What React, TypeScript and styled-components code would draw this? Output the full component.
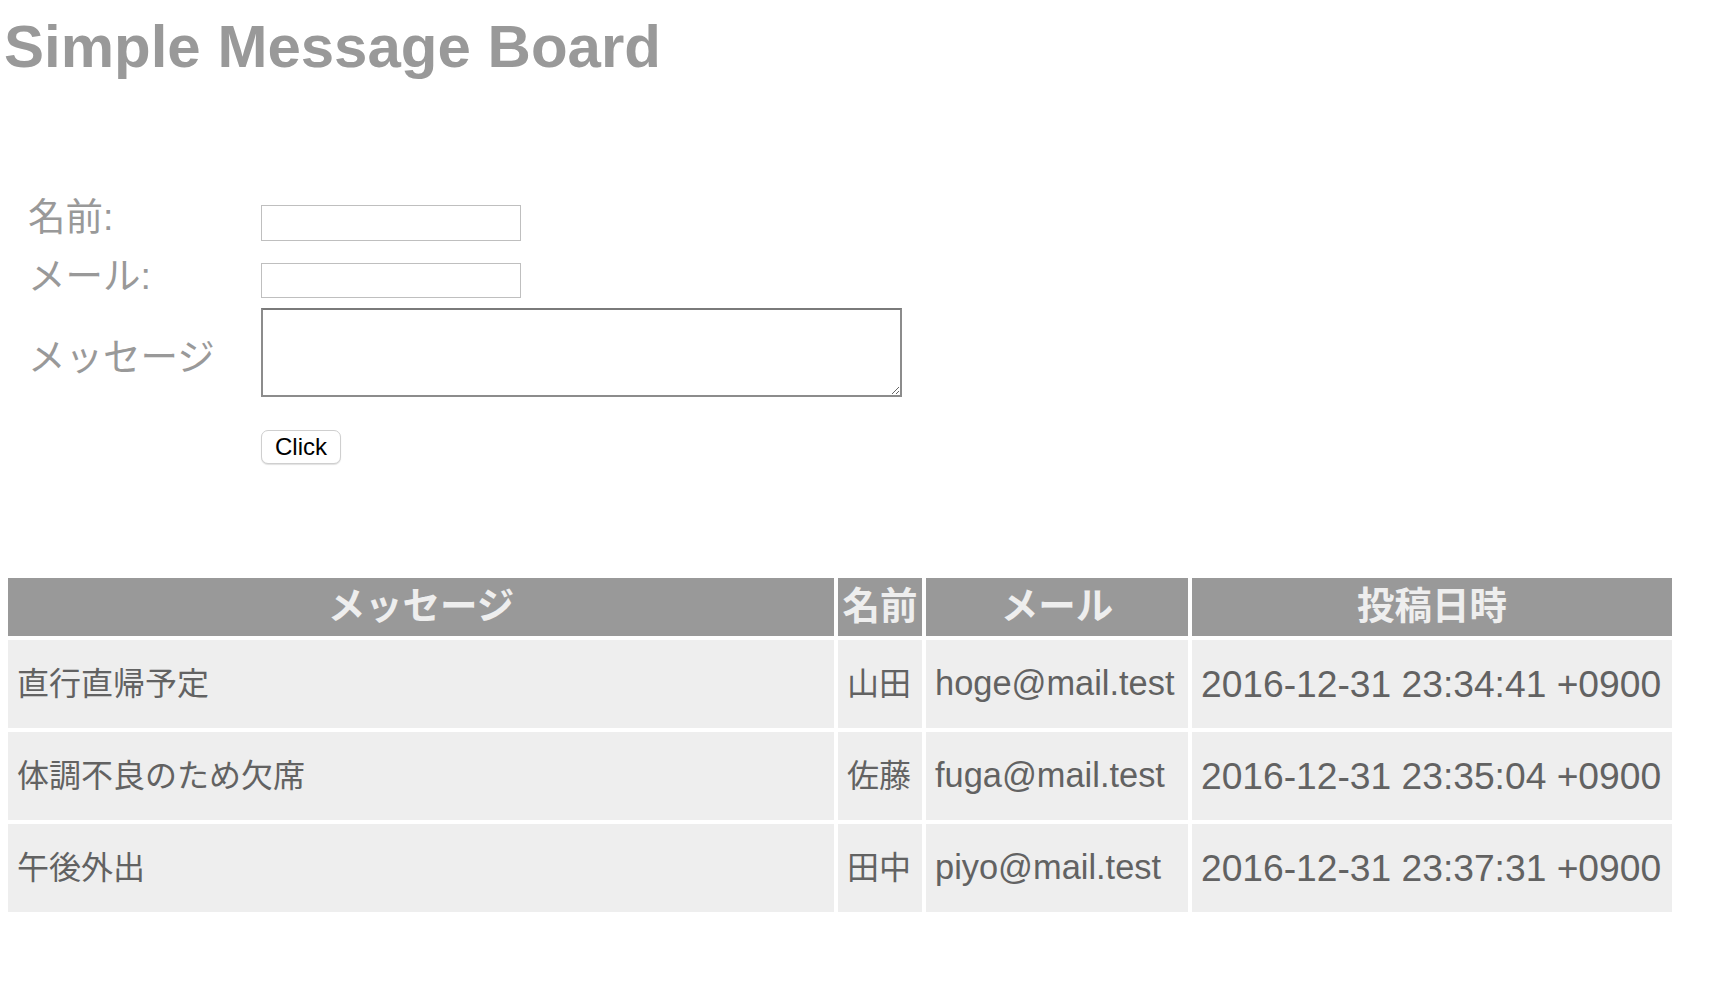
import React from "react";
import styled, { createGlobalStyle } from "styled-components";

const GlobalStyle = createGlobalStyle`
  body {
    margin: 0;
    background: #fff;
    font-family: "Liberation Sans", "Noto Sans CJK JP", sans-serif;
  }
`;

const Page = styled.div`
  padding: 0 4px;
`;

const Title = styled.h1`
  margin: 17px 0 0;
  font-size: 60px;
  line-height: 1;
  font-weight: bold;
  color: #999;
`;

const Form = styled.form`
  margin-top: 128px;
  padding-left: 24px;
  display: flex;
  flex-direction: column;
`;

const FieldRow = styled.div<{ $gap: number }>`
  display: flex;
  align-items: center;
  margin-top: ${(p) => p.$gap}px;
`;

const Label = styled.label<{ $shift: number }>`
  width: 233px;
  flex: none;
  font-size: 37.5px;
  line-height: 34px;
  color: #999;
  margin-top: ${(p) => -p.$shift}px;
  margin-bottom: ${(p) => p.$shift}px;
`;

const TextInput = styled.input<{ $height: number }>`
  box-sizing: border-box;
  width: 260px;
  height: ${(p) => p.$height}px;
  border: 1px solid #bfbfbf;
  background: #fff;
  padding: 2px 4px;
  font-size: 24px;
  outline: none;
`;

const MessageArea = styled.textarea`
  box-sizing: border-box;
  width: 641px;
  height: 89px;
  border: 2px solid #8c8c8c;
  border-top-color: #7a7a7a;
  background: #fff;
  margin: 0;
  padding: 2px 4px;
  font-size: 24px;
  outline: none;
`;

const SubmitButton = styled.button`
  margin-left: 233px;
  box-sizing: border-box;
  width: 80px;
  height: 34px;
  border: 1px solid #cfcfcf;
  border-radius: 7px;
  background: #fff;
  box-shadow: 0 1px 1px rgba(0, 0, 0, 0.12);
  font-family: "Liberation Sans", sans-serif;
  font-size: 24px;
  color: #000;
  padding: 0;
`;

const Board = styled.table`
  margin-top: 110px;
  border-collapse: separate;
  border-spacing: 4px;
  table-layout: fixed;
  width: 1672px;
`;

const HeadCell = styled.th`
  box-sizing: border-box;
  height: 58px;
  padding: 0 4px 1px;
  background: #999;
  color: #eee;
  font-size: 37.5px;
  line-height: 1.2;
  font-weight: bold;
  text-align: center;
  vertical-align: middle;
  white-space: nowrap;
`;

const BodyCell = styled.td<{ $size: number }>`
  box-sizing: border-box;
  height: 88px;
  padding: 0 9px;
  background: #eee;
  color: #626262;
  font-size: ${(p) => p.$size}px;
  line-height: 1.2;
  text-align: left;
  vertical-align: middle;
  white-space: nowrap;
  overflow: hidden;
`;

type Post = {
  message: string;
  name: string;
  mail: string;
  postedAt: string;
};

const posts: Post[] = [
  { message: "直行直帰予定", name: "山田", mail: "hoge@mail.test", postedAt: "2016-12-31 23:34:41 +0900" },
  { message: "体調不良のため欠席", name: "佐藤", mail: "fuga@mail.test", postedAt: "2016-12-31 23:35:04 +0900" },
  { message: "午後外出", name: "田中", mail: "piyo@mail.test", postedAt: "2016-12-31 23:37:31 +0900" },
];

const App = () => {
  return (
    <>
      <GlobalStyle />
      <Page>
        <Title>Simple Message Board</Title>
        <Form onSubmit={(e) => e.preventDefault()}>
          <FieldRow $gap={0}>
            <Label $shift={6}>名前:</Label>
            <TextInput type="text" $height={36} />
          </FieldRow>
          <FieldRow $gap={22}>
            <Label $shift={5}>メール:</Label>
            <TextInput type="text" $height={35} />
          </FieldRow>
          <FieldRow $gap={10}>
            <Label $shift={-4}>メッセージ</Label>
            <MessageArea />
          </FieldRow>
          <FieldRow $gap={33}>
            <SubmitButton type="submit">Click</SubmitButton>
          </FieldRow>
        </Form>
        <Board>
          <colgroup>
            <col style={{ width: 826 }} />
            <col style={{ width: 84 }} />
            <col style={{ width: 262 }} />
            <col style={{ width: 480 }} />
          </colgroup>
          <thead>
            <tr>
              <HeadCell>メッセージ</HeadCell>
              <HeadCell>名前</HeadCell>
              <HeadCell>メール</HeadCell>
              <HeadCell>投稿日時</HeadCell>
            </tr>
          </thead>
          <tbody>
            {posts.map((post) => (
              <tr key={post.postedAt}>
                <BodyCell $size={32}>{post.message}</BodyCell>
                <BodyCell $size={32}>{post.name}</BodyCell>
                <BodyCell $size={34.4}>{post.mail}</BodyCell>
                <BodyCell $size={37.2}>{post.postedAt}</BodyCell>
              </tr>
            ))}
          </tbody>
        </Board>
      </Page>
    </>
  );
};

export default App;
